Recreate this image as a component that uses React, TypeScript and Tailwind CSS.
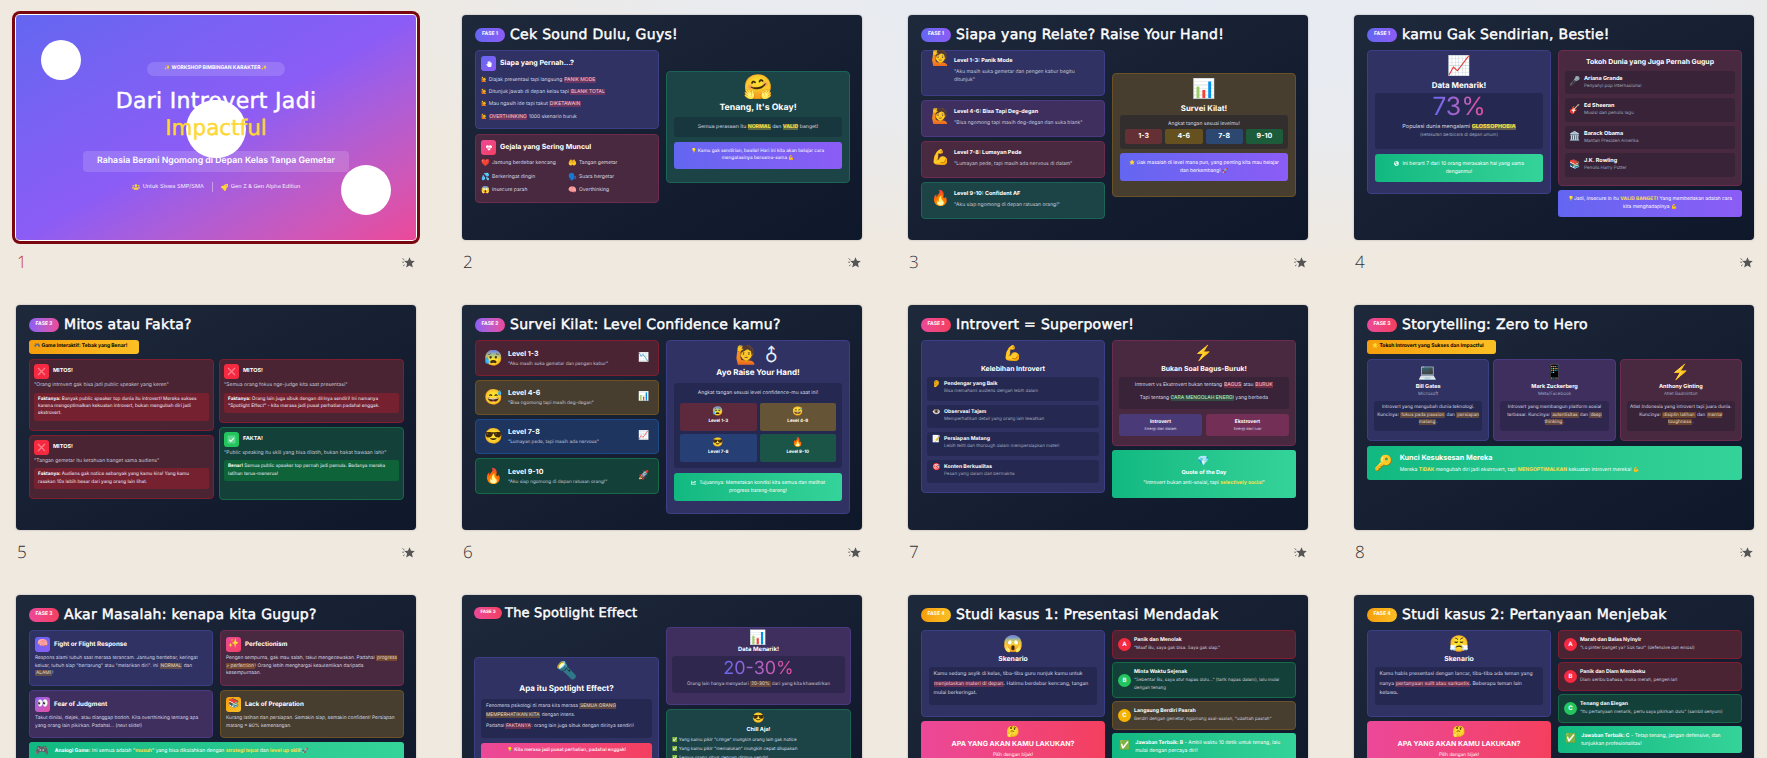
import type { ReactNode } from "react";
import { clsx } from "clsx";
import { FaChartLine, FaGlobeAmericas, FaHandPaper, FaHeartbeat, FaRocket, FaUsers } from "react-icons/fa";

const tones = {
  blue: "bg-[#2f3262] border-[#3c3f85]",
  purple: "bg-[#3e2f5f] border-[#4c3a80]",
  pink: "bg-[#49293f] border-[#6d2b50]",
  green: "bg-[#1c4446] border-[#1b6557]",
  amber: "bg-[#483e2f] border-[#6b5226]",
  red: "bg-[#4a2433] border-[#7d1f30]",
  forest: "bg-[#14403a] border-[#166a45]",
  navy: "bg-[#1e3560] border-[#1f4a8a]",
};
type Tone = keyof typeof tones;

const titleFont = "font-['DejaVu_Sans',sans-serif] [-webkit-text-stroke-width:0.45px]";
const purpleBox = "rounded-[3px] bg-gradient-to-r from-[#6366f1] to-[#8b5cf6] text-white text-center";
const greenBox = "rounded-[3px] bg-gradient-to-r from-[#10b981] to-[#34d399] text-white";
const darkBox = "rounded-[3px] bg-[#0f172a]/30";

function Card({ tone, className, children }: { tone: Tone; className?: string; children: ReactNode }) {
  return <div className={clsx("rounded-[4px] border", tones[tone], className)}>{children}</div>;
}

function Em({ c, className }: { c: string; className?: string }) {
  return <span className={clsx("leading-none font-['Noto_Color_Emoji',sans-serif]", className)}>{c}</span>;
}

function Red({ children }: { children: ReactNode }) {
  return <span className="bg-[#f43f5e]/30 px-[0.5px] text-[#fecdd3]">{children}</span>;
}
function Gold({ children }: { children: ReactNode }) {
  return <span className="bg-[#fde047]/30 text-[#fde047] font-bold">{children}</span>;
}
function Tan({ children }: { children: ReactNode }) {
  return <span className="bg-[#f59e0b]/25 text-[#e7dcc5] px-[1px]">{children}</span>;
}
function Lime({ children }: { children: ReactNode }) {
  return <span className="text-[#fde047] font-bold">{children}</span>;
}

const badges = {
  1: "from-[#6366f1] to-[#8b5cf6]",
  2: "from-[#8b5cf6] to-[#ec4899]",
  3: "from-[#ec4899] to-[#f43f5e]",
  4: "from-[#f59e0b] to-[#fbbf24]",
};

function Slide({ phase, title, children }: { phase: 1 | 2 | 3 | 4; title: string; children: ReactNode }) {
  return (
    <div className="h-[225px] w-[400px] overflow-hidden rounded-[4px] bg-gradient-to-br from-[#1e293b] to-[#0f172a] pl-[13px] pr-[12px] pt-[13px] shadow-[0_0_2px_rgba(0,0,0,0.3)]">
      <div className="mb-[8px] flex h-[14px] items-center gap-[5px]">
        <span className={clsx("flex h-[14px] w-[30px] items-center justify-center rounded-full bg-gradient-to-r text-[5px] font-bold text-white", badges[phase])}>
          FASE {phase}
        </span>
        <span className={clsx(titleFont, "whitespace-nowrap text-[14px] leading-none tracking-[0.3px] text-white")}>{title}</span>
      </div>
      {children}
    </div>
  );
}

function Cek() {
  const gejala = [
    ["❤️", "Jantung berdebar kencang"],
    ["🤲", "Tangan gemetar"],
    ["💦", "Berkeringat dingin"],
    ["🗣️", "Suara bergetar"],
    ["😱", "Insecure parah"],
    ["🧠", "Overthinking"],
  ];
  return (
    <Slide phase={1} title="Cek Sound Dulu, Guys!">
      <div className="grid grid-cols-2 items-center gap-[7px]">
        <div className="flex flex-col gap-[5px]">
          <Card tone="blue" className="h-[79px] p-[5px]">
            <div className="flex items-center gap-[4px] font-bold text-white">
              <span className="flex h-[15px] w-[15px] items-center justify-center rounded-[3px] bg-gradient-to-br from-[#6366f1] to-[#8b5cf6] text-[6px]">
                <FaHandPaper />
              </span>
              <span className="text-[7px]">Siapa yang Pernah...?</span>
            </div>
            <ul className="mt-[3px] text-[5px] leading-[12.2px] text-[#d6d9e6]">
              <li><Em c="🙋" /> Diajak presentasi tapi langsung <Red>PANIK MODE</Red></li>
              <li><Em c="🙋" /> Ditunjuk jawab di depan kelas tapi <Red>BLANK TOTAL</Red></li>
              <li><Em c="🙋" /> Mau ngasih ide tapi takut <Red>DIKETAWAIN</Red></li>
              <li><Em c="🙋" /> <Red>OVERTHINKING</Red> 1000 skenario buruk</li>
            </ul>
          </Card>
          <Card tone="pink" className="h-[69px] p-[5px]">
            <div className="flex items-center gap-[4px] font-bold text-white">
              <span className="flex h-[15px] w-[15px] items-center justify-center rounded-[3px] bg-gradient-to-br from-[#ec4899] to-[#f43f5e] text-[6px]">
                <FaHeartbeat />
              </span>
              <span className="text-[7px]">Gejala yang Sering Muncul</span>
            </div>
            <div className="mt-[2px] grid grid-cols-[87px_1fr] text-[5px] leading-[13.5px] text-[#d6d9e6]">
              {gejala.map(([e, t]) => (
                <div key={t} className="flex items-center gap-[3px]">
                  <Em c={e} className="w-[8px] text-[7px]" />
                  {t}
                </div>
              ))}
            </div>
          </Card>
        </div>
        <Card tone="green" className="h-[112px] px-[7px] pt-[3px] text-center">
          <Em c="🤗" className="block text-[24px]" />
          <div className="mt-[3px] text-[8.75px] font-bold text-white">Tenang, It's Okay!</div>
          <div className={clsx(darkBox, "mt-[2px] py-[6px] text-[5.2px] leading-[8px] text-[#d6d9e6]")}>
            Semua perasaan itu <Gold>NORMAL</Gold> dan <Gold>VALID</Gold> banget!
          </div>
          <div className={clsx(purpleBox, "mt-[5px] px-[9px] py-[6px] text-[4.7px] leading-[7.7px]")}>
            💡Kamu gak sendirian, bestie! Hari ini kita akan belajar cara mengatasinya bersama-sama 💪
          </div>
        </Card>
      </div>
    </Slide>
  );
}

function Relate() {
  const rows: [Tone, string, string, string, string][] = [
    ["blue", "🙋", "Level 1-3: Panik Mode", "\"Aku masih suka gemetar dan pengen kabur begitu ditunjuk\"", "h-[46px] pt-[7px]"],
    ["purple", "🙋", "Level 4-6: Bisa Tapi Deg-degan", "\"Bisa ngomong tapi masih deg-degan dan suka blank\"", "h-[37px] pt-[8px]"],
    ["pink", "💪", "Level 7-8: Lumayan Pede", "\"Lumayan pede, tapi masih ada nervous di dalam\"", "h-[37px] pt-[8px]"],
    ["green", "🔥", "Level 9-10: Confident AF", "\"Aku siap ngomong di depan ratusan orang!\"", "h-[37px] pt-[8px]"],
  ];
  const scale = [
    ["1-3", "bg-[#642f35]"],
    ["4-6", "bg-[#65511f]"],
    ["7-8", "bg-[#2c4770]"],
    ["9-10", "bg-[#1c5c3b]"],
  ];
  return (
    <Slide phase={1} title="Siapa yang Relate? Raise Your Hand!">
      <div className="grid grid-cols-2 items-center gap-[7px]">
        <div className="flex flex-col gap-[4px]">
          {rows.map(([tone, e, t, q, h], i) => (
            <Card key={t} tone={tone} className={clsx("flex gap-[5px] pl-[9px] pr-[8px]", h)}>
              <Em c={e} className={clsx("w-[18px] shrink-0 text-center text-[15px]", i === 0 && "-mt-[7px]")} />
              <div>
                <div className="text-[5.5px] font-bold leading-[7px] text-white">{t}</div>
                <div className="mt-[3px] text-[5px] leading-[8px] text-[#c3c7d8]">{q}</div>
              </div>
            </Card>
          ))}
        </div>
        <Card tone="amber" className="h-[124px] px-[7px] pt-[5px] text-center">
          <Em c="📊" className="block text-[19px]" />
          <div className="mt-[5px] text-[7.8px] font-bold text-white">Survei Kilat!</div>
          <div className={clsx("mt-[1px] rounded-[3px] bg-[#0f172a]/40 px-[5px] pb-[5px] pt-[6px]")}>
            <div className="text-[5px] leading-[7px] text-[#d6d9e6]">Angkat tangan sesuai levelmu!</div>
            <div className="mt-[1px] grid grid-cols-4 gap-[3px]">
              {scale.map(([t, c]) => (
                <div key={t} className={clsx("flex h-[15px] items-center justify-center rounded-[2px] text-[7px] font-bold text-white", c)}>{t}</div>
              ))}
            </div>
          </div>
          <div className={clsx(purpleBox, "mt-[4px] px-[8px] py-[6px] text-[4.9px] leading-[8px]")}>
            ⭐ Gak masalah di level mana pun, yang penting kita mau belajar dan berkembang! 🚀
          </div>
        </Card>
      </div>
    </Slide>
  );
}

function Bestie() {
  const people = [
    ["🎤", "Ariana Grande", "Penyanyi pop internasional", "h-[23px]"],
    ["🎸", "Ed Sheeran", "Musisi dan penulis lagu", "h-[24px]"],
    ["🏛️", "Barack Obama", "Mantan Presiden Amerika", "h-[23px]"],
    ["📚", "J.K. Rowling", "Penulis Harry Potter", "h-[24px]"],
  ];
  return (
    <Slide phase={1} title="kamu Gak Sendirian, Bestie!">
      <div className="grid grid-cols-2 items-start gap-[7px]">
        <Card tone="blue" className="h-[144px] px-[7px] pt-[5px] text-center">
          <Em c="📈" className="block text-[19px]" />
          <div className="mt-[4px] text-[8px] font-bold text-white">Data Menarik!</div>
          <div className={clsx(darkBox, "mt-[2px] h-[56px]")}>
            <div className="inline-block bg-gradient-to-r from-[#6366f1] to-[#ec4899] bg-clip-text text-[25px] leading-[28px] text-transparent">73%</div>
            <div className="mt-[2px] text-[5.5px] leading-[8px] text-[#d6d9e6]">Populasi dunia mengalami <Gold>GLOSSOPHOBIA</Gold></div>
            <div className="mt-[2px] text-[4.4px] leading-[6px] text-[#9ca3b8]">(ketakutan berbicara di depan umum)</div>
          </div>
          <div className={clsx(greenBox, "mt-[5px] px-[8px] py-[6px] text-[5px] leading-[8px]")}>
            <FaGlobeAmericas className="mr-[2px] inline text-[5px]" /> Ini berarti 7 dari 10 orang merasakan hal yang sama denganmu!
          </div>
        </Card>
        <div className="flex flex-col gap-[4px]">
          <Card tone="pink" className="h-[136px] px-[6px] pt-[6px]">
            <div className="text-center text-[6.9px] font-bold leading-[9px] text-white">Tokoh Dunia yang Juga Pernah Gugup</div>
            <div className="mt-[5px] flex flex-col gap-[4px]">
              {people.map(([e, n, s, h]) => (
                <div key={n} className={clsx(darkBox, "flex items-center gap-[5px] pl-[4px]", h)}>
                  <Em c={e} className="w-[10px] text-center text-[9px]" />
                  <div>
                    <div className="text-[5.5px] font-bold leading-[7px] text-white">{n}</div>
                    <div className="text-[4.5px] leading-[7px] text-[#9ca3b8]">{s}</div>
                  </div>
                </div>
              ))}
            </div>
          </Card>
          <div className={clsx(purpleBox, "h-[27px] px-[8px] pt-[5px] text-[4.9px] leading-[8px]")}>
            💡Jadi, insecure lo itu <Lime>VALID BANGET!</Lime> Yang membedakan adalah cara kita menghadapinya 💪
          </div>
        </div>
      </div>
    </Slide>
  );
}

function Myth({ ok, title, quote, label, body, className }: { ok?: boolean; title: string; quote: string; label: string; body: string; className: string }) {
  return (
    <Card tone={ok ? "forest" : "red"} className={clsx("px-[4px] pt-[4px]", className)}>
      <div className="flex items-center gap-[4px]">
        <span className={clsx("flex h-[15px] w-[15px] items-center justify-center rounded-[3px]", ok ? "bg-[#22c55e]" : "bg-[#f5293f]")}>
          {ok ? (
            <svg width="9" height="9" viewBox="0 0 9 9">
              <rect x="0.5" y="0.5" width="8" height="8" rx="1" fill="#5cd68a" />
              <path d="M2 4.6 3.8 6.4 7 2.8" fill="none" stroke="#f2fff6" strokeWidth="1.1" />
            </svg>
          ) : (
            <svg width="9" height="9" viewBox="0 0 9 9">
              <path d="M1 1 8 8M8 1 1 8" stroke="#ff7f8e" strokeWidth="1.2" />
            </svg>
          )}
        </span>
        <span className="text-[5.5px] font-bold text-white">{title}</span>
      </div>
      <div className="mt-[3px] text-[5px] leading-[7.6px] text-[#c3c7d8]">{quote}</div>
      <div className={clsx("mt-[3px] rounded-[2px] px-[4px] py-[3px] text-[4.7px] leading-[7.4px] text-[#eef]", ok ? "bg-[#0e6338]" : "bg-[#75212f]")}>
        <b className="text-white">{label}</b> {body}
      </div>
    </Card>
  );
}

function Mitos() {
  return (
    <Slide phase={2} title="Mitos atau Fakta?">
      <div className="mb-[5px] flex h-[14px] w-[110px] items-center rounded-[3px] bg-gradient-to-r from-[#f59e0b] to-[#fbbf24] pl-[5px] text-[5px] font-bold text-black">
        🎮 Game Interaktif: Tebak yang Benar!
      </div>
      <div className="grid grid-cols-2 items-start gap-[5px]">
        <div className="flex flex-col gap-[3.5px]">
          <Myth className="h-[72px]" title="MITOS!" quote={'"Orang introvert gak bisa jadi public speaker yang keren"'} label="Faktanya:" body="Banyak public speaker top dunia itu introvert! Mereka sukses karena mengoptimalkan kekuatan introvert, bukan mengubah diri jadi ekstrovert." />
          <Myth className="h-[64px]" title="MITOS!" quote={'"Tangan gemetar itu ketahuan banget sama audiens"'} label="Faktanya:" body="Audiens gak notice sebanyak yang kamu kira! Yang kamu rasakan 10x lebih besar dari yang orang lain lihat." />
        </div>
        <div className="flex flex-col gap-[3.5px]">
          <Myth className="h-[64px]" title="MITOS!" quote={'"Semua orang fokus nge-judge kita saat presentasi"'} label="Faktanya:" body={'Orang lain juga sibuk dengan dirinya sendiri! Ini namanya "Spotlight Effect" - kita merasa jadi pusat perhatian padahal enggak.'} />
          <Myth ok className="h-[73px]" title="FAKTA!" quote={'"Public speaking itu skill yang bisa dilatih, bukan bakat bawaan lahir"'} label="Benar!" body="Semua public speaker top pernah jadi pemula. Bedanya mereka latihan terus-menerus!" />
        </div>
      </div>
    </Slide>
  );
}

function Survei() {
  const rows: [Tone, string, string, string, string, string][] = [
    ["red", "😰", "Level 1-3", "\"Aku masih suka gemetar dan pengen kabur\"", "📉", "h-[36px]"],
    ["amber", "😅", "Level 4-6", "\"Bisa ngomong tapi masih deg-degan\"", "📊", "h-[35px]"],
    ["navy", "😎", "Level 7-8", "\"Lumayan pede, tapi masih ada nervous\"", "📈", "h-[35px]"],
    ["forest", "🔥", "Level 9-10", "\"Aku siap ngomong di depan ratusan orang!\"", "🚀", "h-[36px]"],
  ];
  const cells = [
    ["😰", "Level 1-3", "bg-[#5c2a3c]"],
    ["😅", "Level 4-6", "bg-[#665436]"],
    ["😎", "Level 7-8", "bg-[#264076]"],
    ["🔥", "Level 9-10", "bg-[#1b5548]"],
  ];
  return (
    <Slide phase={2} title="Survei Kilat: Level Confidence kamu?">
      <div className="grid grid-cols-2 items-start gap-[7px]">
        <div className="flex flex-col gap-[4px]">
          {rows.map(([tone, e, t, q, m, h]) => (
            <Card key={t} tone={tone} className={clsx("flex items-center pl-[8px] pr-[8px]", h)}>
              <Em c={e} className="w-[16px] shrink-0 text-center text-[15px]" />
              <div className="ml-[8px] grow">
                <div className="text-[7px] font-bold leading-[9px] text-white">{t}</div>
                <div className="mt-[3px] text-[4.7px] leading-[7px] text-[#c3c7d8]">{q}</div>
              </div>
              <Em c={m} className="text-[9px]" />
            </Card>
          ))}
        </div>
        <Card tone="blue" className="h-[174px] px-[7px] pt-[5px] text-center">
          <div className="flex h-[20px] items-center justify-center gap-[6px] text-white">
            <Em c="🙋" className="text-[18px]" />
            <span className="inline-block rotate-[-45deg] font-['DejaVu_Sans',sans-serif] text-[18px] leading-none text-[#e6eefc]">♂</span>
          </div>
          <div className="mt-[1px] text-[8px] font-bold leading-[11px] text-white">Ayo Raise Your Hand!</div>
          <div className={clsx(darkBox, "mt-[5px] h-[85px] px-[6px] pt-[7px]")}>
            <div className="text-[5px] leading-[7px] text-[#d6d9e6]">Angkat tangan sesuai level confidence-mu saat ini!</div>
            <div className="mt-[6px] grid grid-cols-2 gap-[3px]">
              {cells.map(([e, t, c]) => (
                <div key={t} className={clsx("flex h-[28px] flex-col items-center justify-center rounded-[2px] text-[4.5px] font-bold text-white", c)}>
                  <Em c={e} className="text-[9px]" />
                  <span className="mt-[2px]">{t}</span>
                </div>
              ))}
            </div>
          </div>
          <div className={clsx(greenBox, "mt-[5px] h-[28px] px-[8px] pt-[6px] text-[4.9px] leading-[8px]")}>
            <FaChartLine className="mr-[2px] inline text-[5px]" /> Tujuannya: Memetakan kondisi kita semua dan melihat progress bareng-bareng!
          </div>
        </Card>
      </div>
    </Slide>
  );
}

function Superpower() {
  const rows = [
    ["👂", "Pendengar yang Baik", "Bisa memahami audiens dengan lebih dalam", "h-[24px]"],
    ["👁️", "Observasi Tajam", "Memperhatikan detail yang orang lain lewatkan", "h-[23px]"],
    ["📝", "Persiapan Matang", "Lebih teliti dan thorough dalam mempersiapkan materi", "h-[24px]"],
    ["🎯", "Konten Berkualitas", "Pesan yang dalam dan bermakna", "h-[23px]"],
  ];
  return (
    <Slide phase={3} title="Introvert = Superpower!">
      <div className="grid grid-cols-2 items-start gap-[7px]">
        <Card tone="blue" className="h-[153px] px-[5px] pt-[5px]">
          <Em c="💪" className="block text-center text-[15px]" />
          <div className="mt-[3px] text-center text-[6.9px] font-bold leading-[9px] text-white">Kelebihan Introvert</div>
          <div className="mt-[4px] flex flex-col gap-[4px]">
            {rows.map(([e, t, s, h]) => (
              <div key={t} className={clsx(darkBox, "flex gap-[3px] pl-[5px] pt-[4px]", h)}>
                <Em c={e} className="w-[9px] text-[7px]" />
                <div>
                  <div className="text-[5.2px] font-bold leading-[7px] text-white">{t}</div>
                  <div className="text-[4.5px] leading-[7px] text-[#9ca3b8]">{s}</div>
                </div>
              </div>
            ))}
          </div>
        </Card>
        <div className="flex flex-col gap-[4px]">
          <Card tone="pink" className="h-[106px] px-[6px] pt-[5px] text-center">
            <Em c="⚡" className="block text-[15px]" />
            <div className="mt-[3px] text-[6.9px] font-bold leading-[9px] text-white">Bukan Soal Bagus-Buruk!</div>
            <div className={clsx(darkBox, "mt-[4px] h-[32px] pt-[2px] text-[5px] leading-[12.5px] text-[#d6d9e6]")}>
              <div>Introvert vs Ekstrovert bukan tentang <Red>BAGUS</Red> atau <Red>BURUK</Red></div>
              <div>Tapi tentang <span className="bg-[#22c55e]/25 text-[#bbf7d0]">CARA MENGOLAH ENERGI</span> yang berbeda</div>
            </div>
            <div className="mt-[5px] grid grid-cols-2 gap-[4px]">
              <div className="flex h-[22px] flex-col justify-center rounded-[3px] bg-[#4b3a78] text-white">
                <div className="text-[5px] font-bold leading-[7px]">Introvert</div>
                <div className="text-[3.9px] leading-[6px] text-[#d6d9e6]">Energi dari dalam</div>
              </div>
              <div className="flex h-[22px] flex-col justify-center rounded-[3px] bg-[#732f56] text-white">
                <div className="text-[5px] font-bold leading-[7px]">Ekstrovert</div>
                <div className="text-[3.9px] leading-[6px] text-[#d6d9e6]">Energi dari luar</div>
              </div>
            </div>
          </Card>
          <div className={clsx(greenBox, "h-[48px] pt-[7px] text-center")}>
            <Em c="💎" className="block text-[10px]" />
            <div className="mt-[2px] text-[5.5px] font-bold leading-[8px]">Quote of the Day</div>
            <div className="mt-[2px] text-[5px] leading-[8px]">"Introvert bukan anti-sosial, tapi <Lime>selectively social</Lime>"</div>
          </div>
        </div>
      </div>
    </Slide>
  );
}

function Story() {
  const people: [Tone, string, string, string, ReactNode][] = [
    ["blue", "💻", "Bill Gates", "Microsoft", <>Introvert yang mengubah dunia teknologi. Kuncinya: <Tan>fokus pada passion</Tan> dan <Tan>persiapan matang</Tan>.</>],
    ["purple", "📱", "Mark Zuckerberg", "Meta/Facebook", <>Introvert yang membangun platform sosial terbesar. Kuncinya: <Tan>autentisitas</Tan> dan <Tan>deep thinking</Tan>.</>],
    ["pink", "⚡", "Anthony Ginting", "Atlet Badminton", <>Atlet Indonesia yang introvert tapi juara dunia. Kuncinya: <Tan>disiplin latihan</Tan> dan <Tan>mental toughness</Tan>.</>],
  ];
  return (
    <Slide phase={3} title="Storytelling: Zero to Hero">
      <div className="mb-[5px] flex h-[14px] w-[129px] items-center rounded-[3px] bg-gradient-to-r from-[#f59e0b] to-[#fbbf24] pl-[5px] text-[5px] font-bold text-black">
        🌟 Tokoh Introvert yang Sukses dan Impactful
      </div>
      <div className="grid grid-cols-3 gap-[4px]">
        {people.map(([tone, e, n, c, d]) => (
          <Card key={n} tone={tone} className="h-[82px] px-[6px] pt-[5px] text-center">
            <Em c={e} className="block text-[15px]" />
            <div className="mt-[3px] text-[5.5px] font-bold leading-[8px] text-white">{n}</div>
            <div className="text-[4.5px] leading-[7px] text-[#9ca3b8]">{c}</div>
            <div className={clsx(darkBox, "mt-[3px] h-[30px] px-[3px] pt-[3px] text-[4.7px] leading-[7.6px] text-[#d6d9e6]")}>{d}</div>
          </Card>
        ))}
      </div>
      <div className={clsx(greenBox, "mt-[5px] flex h-[34px] items-center gap-[7px] pl-[7px]")}>
        <Em c="🔑" className="text-[15px]" />
        <div>
          <div className="text-[7.2px] font-bold leading-[10px]">Kunci Kesuksesan Mereka</div>
          <div className="mt-[3px] text-[5px] leading-[8px]">Mereka <Lime>TIDAK</Lime> mengubah diri jadi ekstrovert, tapi <Lime>MENGOPTIMALKAN</Lime> kekuatan introvert mereka! 💪</div>
        </div>
      </div>
    </Slide>
  );
}

function Akar() {
  const cards: [Tone, string, string, string, ReactNode, string][] = [
    ["blue", "🧠", "from-[#6366f1] to-[#8b5cf6]", "Fight or Flight Response", <>Respons alami tubuh saat merasa terancam. Jantung berdebar, keringat keluar, tubuh siap "bertarung" atau "melarikan diri". Ini <Tan>NORMAL</Tan> dan <Tan>ALAMI</Tan>!</>, "h-[56px]"],
    ["pink", "✨", "from-[#ec4899] to-[#f43f5e]", "Perfectionism", <>Pengen sempurna, gak mau salah, takut mengecewakan. Padahal <Tan>progress &gt; perfection</Tan>! Orang lebih menghargai keautentikan daripada kesempurnaan.</>, "h-[56px]"],
    ["purple", "👀", "from-[#8b5cf6] to-[#ec4899]", "Fear of Judgment", <>Takut dinilai, diejek, atau dianggap bodoh. Kita overthinking tentang apa yang orang lain pikirkan. Padahal... (next slide!)</>, "h-[48px]"],
    ["amber", "📚", "from-[#f59e0b] to-[#fbbf24]", "Lack of Preparation", <>Kurang latihan dan persiapan. Semakin siap, semakin confident! Persiapan matang = 80% kemenangan.</>, "h-[48px]"],
  ];
  return (
    <Slide phase={3} title="Akar Masalah: kenapa kita Gugup?">
      <div className="grid grid-cols-2 gap-x-[7px] gap-y-[4px]">
        {cards.map(([tone, e, g, t, d, h]) => (
          <Card key={t} tone={tone} className={clsx("px-[5px] pt-[6px]", h)}>
            <div className="flex items-center gap-[4px]">
              <span className={clsx("flex h-[15px] w-[15px] items-center justify-center rounded-[3px] bg-gradient-to-br", g)}>
                <Em c={e} className="text-[9px]" />
              </span>
              <span className="text-[6.2px] font-bold text-white">{t}</span>
            </div>
            <div className="mt-[3px] text-[4.8px] leading-[7.5px] text-[#d6d9e6]">{d}</div>
          </Card>
        ))}
      </div>
      <div className={clsx(greenBox, "mt-[4px] flex h-[30px] gap-[6px] pl-[6px] pt-[3px] text-[5px] leading-[8px]")}>
        <Em c="🎮" className="text-[11px]" />
        <span className="pt-[2px]"><b>Analogi Game:</b> Ini semua adalah "<Lime>musuh</Lime>" yang bisa dikalahkan dengan <Lime>strategi tepat</Lime> dan <Lime>level up skill</Lime>! 🚀</span>
      </div>
    </Slide>
  );
}

function Spotlight() {
  return (
    <div className="h-[225px] w-[400px] overflow-hidden rounded-[4px] bg-gradient-to-br from-[#1e293b] to-[#0f172a] pl-[12px] pr-[11px] pt-[12px] shadow-[0_0_2px_rgba(0,0,0,0.3)]">
      <div className="mb-[8px] flex h-[12px] items-center gap-[3px]">
        <span className={clsx("flex h-[12px] w-[28px] items-center justify-center rounded-full bg-gradient-to-r text-[4.5px] font-bold text-white", badges[3])}>FASE 3</span>
        <span className={clsx(titleFont, "text-[13px] leading-none tracking-[0.2px] text-white")}>The Spotlight Effect</span>
      </div>
      <div className="grid grid-cols-[185px_185px] items-center gap-[7px]">
        <Card tone="blue" className="h-[113px] px-[6px] pt-[5px] text-center">
          <Em c="🔦" className="block text-[17px]" />
          <div className="mt-[3px] text-[8px] font-bold leading-[11px] text-white">Apa itu Spotlight Effect?</div>
          <div className={clsx(darkBox, "mt-[5px] h-[39px] px-[5px] pt-[3px] text-left text-[4.8px] leading-[9px] text-[#d6d9e6]")}>
            Fenomena psikologi di mana kita merasa <Tan>SEMUA ORANG MEMPERHATIKAN KITA</Tan> dengan intens.
            <div className="mt-[2px]">Padahal <Red>FAKTANYA</Red>: orang lain juga sibuk dengan dirinya sendiri!</div>
          </div>
          <div className="mt-[5px] flex h-[17px] items-center justify-center rounded-[3px] bg-gradient-to-r from-[#ec4899] to-[#f43f5e] text-[4.7px] font-medium text-white">
            💡 Kita merasa jadi pusat perhatian, padahal enggak!
          </div>
        </Card>
        <div className="flex flex-col gap-[4px]">
          <Card tone="purple" className="h-[78px] px-[5px] pt-[3px] text-center">
            <Em c="📊" className="block text-[14px]" />
            <div className="mt-[1px] text-[6px] font-bold leading-[8px] text-white">Data Menarik!</div>
            <div className={clsx(darkBox, "mt-[2px] h-[37px]")}>
              <div className="inline-block bg-gradient-to-r from-[#6366f1] to-[#ec4899] bg-clip-text text-[18px] leading-[24px] text-transparent">20-30%</div>
              <div className="text-[4.7px] leading-[7px] text-[#c3c7d8]">Orang lain hanya menyadari <Tan>20-30%</Tan> dari yang kita khawatirkan</div>
            </div>
          </Card>
          <Card tone="green" className="h-[90px] px-[5px] pt-[4px]">
            <Em c="😎" className="block text-center text-[10px]" />
            <div className="mt-[2px] text-center text-[5.5px] font-bold leading-[8px] text-white">Chill Aja!</div>
            <div className="mt-[3px] text-[4.5px] leading-[8.8px] text-[#d6d9e6]">
              <div>✅ Yang kamu pikir "cringe" mungkin orang lain gak notice</div>
              <div>✅ Yang kamu pikir "memalukan" mungkin cepat dilupakan</div>
              <div>✅ Semua orang sibuk dengan dirinya sendiri</div>
            </div>
          </Card>
        </div>
      </div>
    </div>
  );
}

function Kasus({ n, title, face, scenario, options, answer }: {
  n: number; title: string; face: string; scenario: ReactNode;
  options: { l: string; tone: Tone; dot: string; t: string; d: string; h: string }[];
  answer: { k: string; d: string };
}) {
  return (
    <Slide phase={4} title={`Studi kasus ${n}: ${title}`}>
      <div className="grid grid-cols-2 items-start gap-[7px]">
        <div className="flex flex-col gap-[4px]">
          <Card tone="blue" className="h-[87px] px-[7px] pt-[5px] text-center">
            <Em c={face} className="block text-[16px]" />
            <div className="mt-[2px] text-[6.9px] font-bold leading-[9px] text-white">Skenario</div>
            <div className={clsx(darkBox, "mt-[4px] h-[38px] px-[4.5px] pt-[3px] text-left text-[5.1px] leading-[9.6px] text-[#d6d9e6]")}>{scenario}</div>
          </Card>
          <div className="h-[80px] rounded-[4px] bg-gradient-to-r from-[#ec4899] to-[#f43f5e] pt-[5px] text-center text-white">
            <Em c="🤔" className="block text-[11px]" />
            <div className="mt-[2px] text-[7px] font-bold leading-[10px]">APA YANG AKAN KAMU LAKUKAN?</div>
            <div className="mt-[2px] text-[4.7px] leading-[8px]">Pilih dengan bijak!</div>
          </div>
        </div>
        <div className="flex flex-col gap-[3px]">
          {options.map((o) => (
            <Card key={o.l} tone={o.tone} className={clsx("flex items-center gap-[3px] pl-[5px] pr-[4px]", o.h)}>
              <span className={clsx("flex h-[13px] w-[13px] shrink-0 items-center justify-center rounded-full text-[6px] font-bold text-white", o.dot)}>{o.l}</span>
              <div>
                <div className="text-[5.2px] font-bold leading-[8px] text-white">{o.t}</div>
                <div className="mt-[1px] text-[4.5px] leading-[8px] text-[#c3c7d8]">{o.d}</div>
              </div>
            </Card>
          ))}
          <div className={clsx(greenBox, "flex h-[27px] items-center gap-[5px] pl-[7px] pr-[4px] text-[5px] leading-[8px]")}>
            <Em c="✅" className="text-[9px]" />
            <span><b>{answer.k}</b> - {answer.d}</span>
          </div>
        </div>
      </div>
    </Slide>
  );
}

function StarIcon() {
  return (
    <svg width="13" height="11" viewBox="0 0 13 11" className="mt-[1px]">
      <path d="M7.5 0.2 9 3.8l3.8.3-2.9 2.5.9 3.8-3.3-2-3.3 2 .9-3.8L2.2 4.1 6 3.8z" fill="#555" />
      <path d="M0.5 1.5 2.5 3M0.2 5.2H2M1 9l1.6-1.2" stroke="#555" strokeWidth="0.8" />
    </svg>
  );
}

const slides = [
  <div key="1" className="relative h-[225px] w-[400px] overflow-hidden rounded-[4px] bg-gradient-to-br from-[#6366f1] via-[#8b5cf6] to-[#ec4899]">
    <div className="absolute left-[25px] top-[25px] h-[40px] w-[40px] rounded-full bg-white" />
    <div className="absolute left-[170px] top-[85px] h-[58px] w-[60px] rounded-full bg-white" />
    <div className="absolute left-[325px] top-[150px] h-[50px] w-[50px] rounded-full bg-white" />
    <div className="relative flex h-full flex-col items-center pt-[47px] text-white">
      <div className="flex h-[14px] w-[138px] items-center justify-center rounded-full bg-white/15 text-[5px] font-bold">✨ WORKSHOP BIMBINGAN KARAKTER ✨</div>
      <div className={clsx(titleFont, "mt-[13px] text-[22px] leading-[26px] tracking-[0.3px] text-white")}>Dari Introvert Jadi</div>
      <div className={clsx(titleFont, "mt-[3px] text-[21.5px] leading-[21px] text-[#fdd835]")}>Impactful</div>
      <div className="mt-[12px] flex h-[21px] w-[266px] items-center justify-center rounded-[4px] bg-white/15 text-[8.75px] font-semibold">Rahasia Berani Ngomong di Depan Kelas Tanpa Gemetar</div>
      <div className="mt-[10px] flex items-center gap-[8px] text-[5.6px] leading-[10px] text-[#f3eefe]">
        <span className="flex items-center gap-[3px]"><FaUsers className="text-[8px] text-[#fdd835]" /> Untuk Siswa SMP/SMA</span>
        <span className="h-[10px] w-px bg-white/40" />
        <span className="flex items-center gap-[3px]"><FaRocket className="text-[7px] text-[#fdd835]" /> Gen Z &amp; Gen Alpha Edition</span>
      </div>
    </div>
  </div>,
  <Cek key="2" />,
  <Relate key="3" />,
  <Bestie key="4" />,
  <Mitos key="5" />,
  <Survei key="6" />,
  <Superpower key="7" />,
  <Story key="8" />,
  <Akar key="9" />,
  <Spotlight key="10" />,
  <Kasus
    key="11"
    n={1}
    title="Presentasi Mendadak"
    face="😱"
    scenario={<>Kamu sedang asyik di kelas, tiba-tiba guru nunjuk kamu untuk <Red>menjelaskan materi di depan</Red>. Hatimu berdebar kencang, tangan mulai berkeringat.</>}
    options={[
      { l: "A", tone: "red", dot: "bg-[#f5293f]", t: "Panik dan Menolak", d: "\"Maaf Bu, saya gak bisa. Saya gak siap.\"", h: "h-[29px]" },
      { l: "B", tone: "forest", dot: "bg-[#22c55e]", t: "Minta Waktu Sejenak", d: "\"Sebentar Bu, saya atur napas dulu...\" (tarik napas dalam), lalu mulai dengan tenang", h: "h-[36px]" },
      { l: "C", tone: "amber", dot: "bg-[#f5b301]", t: "Langsung Berdiri Pasrah", d: "Berdiri dengan gemetar, ngomong asal-asalan, \"udahlah pasrah\"", h: "h-[29px]" },
    ]}
    answer={{ k: "Jawaban Terbaik: B", d: "Ambil waktu 10 detik untuk tenang, lalu mulai dengan percaya diri!" }}
  />,
  <Kasus
    key="12"
    n={2}
    title="Pertanyaan Menjebak"
    face="😤"
    scenario={<>Kamu habis presentasi dengan lancar, tiba-tiba ada teman yang nanya <Red>pertanyaan sulit atau sarkastis</Red>. Beberapa teman lain ketawa.</>}
    options={[
      { l: "A", tone: "red", dot: "bg-[#f5293f]", t: "Marah dan Balas Nyinyir", d: "\"Lo pinter banget ya? Sok tau!\" (defensive dan emosi)", h: "h-[29px]" },
      { l: "B", tone: "red", dot: "bg-[#f5293f]", t: "Panik dan Diam Membeku", d: "Diam seribu bahasa, muka merah, pengen lari", h: "h-[29px]" },
      { l: "C", tone: "forest", dot: "bg-[#22c55e]", t: "Tenang dan Elegan", d: "\"Itu pertanyaan menarik, perlu saya pikirkan dulu\" (sambil senyum)", h: "h-[29px]" },
    ]}
    answer={{ k: "Jawaban Terbaik: C", d: "Tetap tenang, jangan defensive, dan tunjukkan profesionalitas!" }}
  />,
];

export default function App() {
  return (
    <div className="h-[758px] overflow-hidden bg-[#efe9e0] bg-[radial-gradient(ellipse_900px_260px_at_1200px_0px,#e7ebf3_0%,#e9ebf0_50%,transparent_100%)] pl-4 pt-[15px] font-['Inter',sans-serif] [text-rendering:geometricPrecision]">
      <div className="grid grid-cols-[repeat(4,400px)] gap-x-[46px]">
        {slides.map((s, i) => (
          <div key={i} className="h-[290px]">
            <div className={clsx("rounded-[4px]", i === 0 && "shadow-[0_0_0_1px_#fff,0_0_0_4px_#7a0710]")}>{s}</div>
            <div className="mt-[12px] flex items-center justify-between pl-[1px] pr-[1px]">
              <span className={clsx("font-['Open_Sans',sans-serif] text-[17px] font-light leading-[20px]", i === 0 ? "text-[#c43e1c]" : "text-[#333]")}>{i + 1}</span>
              <StarIcon />
            </div>
          </div>
        ))}
      </div>
    </div>
  );
}
